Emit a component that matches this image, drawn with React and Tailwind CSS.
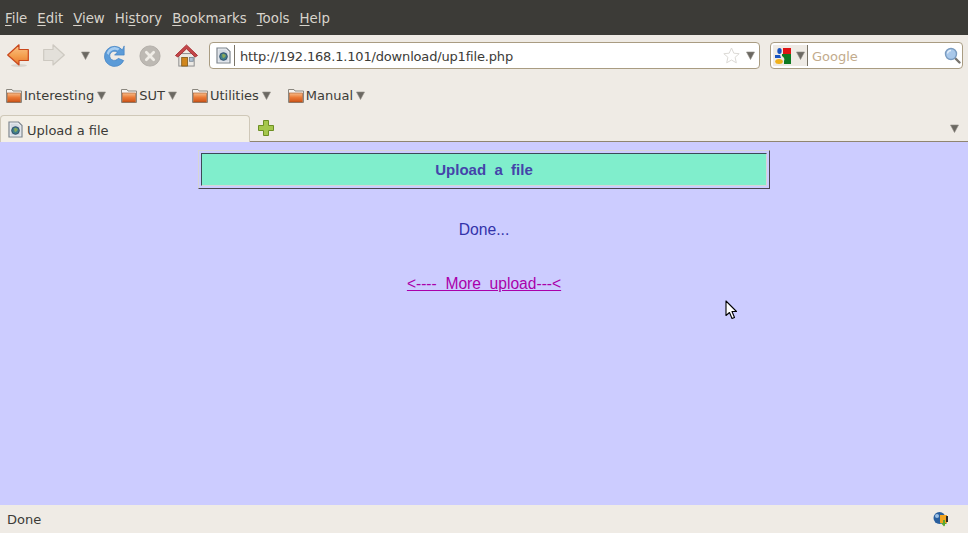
import React from "react";

const UI_FONT = "font-['DejaVu_Sans',sans-serif]";

const Caret = ({ className = "" }) => (
  <svg width="9" height="9" viewBox="0 0 9 9" className={`shrink-0 ${className}`}>
    <path d="M0.5 1H8.5L4.5 8.5Z" fill="#6b6862" stroke="#8f8b83" strokeWidth="0.6" />
  </svg>
);

const PageIcon = () => (
  <svg width="15" height="17" viewBox="0 0 15 17" className="shrink-0">
    <path d="M1 1H10.5L14 4.5V16H1Z" fill="#eef1f4" stroke="#7d858e" strokeWidth="1.2" />
    <path d="M2.5 2.5H9.5L12.5 5.5V14.5H2.5Z" fill="#d3dae2" />
    <circle cx="7.5" cy="9.5" r="3.8" fill="#3f7f8a" stroke="#33506e" />
    <path d="M6 7.5C7 6.5 9 7 9.8 8.5C9 10.5 7.5 11.5 6.5 10.5Z" fill="#8aa85a" />
  </svg>
);

const Folder = () => (
  <svg width="16" height="15" viewBox="0 0 16 15" className="shrink-0">
    <defs>
      <linearGradient id="folderBody" x1="0" y1="0" x2="0" y2="1">
        <stop offset="0" stopColor="#f7bd8a" />
        <stop offset="0.5" stopColor="#ea7a36" />
        <stop offset="1" stopColor="#cf5418" />
      </linearGradient>
    </defs>
    <path d="M0.5 1.5H6L7 3H15.5V14.5H0.5Z" fill="#f6f4f0" stroke="#8b877f" />
    <rect x="1.5" y="5" width="13" height="9" fill="url(#folderBody)" stroke="#a8521f" strokeWidth="0.6" />
  </svg>
);

const BackIcon = () => (
  <svg width="22" height="23" viewBox="0 0 22 23">
    <defs>
      <linearGradient id="backFill" x1="0" y1="0" x2="0" y2="1">
        <stop offset="0" stopColor="#fbc48a" />
        <stop offset="0.55" stopColor="#f4a04f" />
        <stop offset="1" stopColor="#e8742b" />
      </linearGradient>
    </defs>
    <ellipse cx="12" cy="21.5" rx="8" ry="1.4" fill="#d8d4cd" />
    <path d="M0.7 11L12 0.8V5.5H21.3V16.5H12V21Z" fill="url(#backFill)" stroke="#c9471b" strokeWidth="1.2" strokeLinejoin="round" />
  </svg>
);

const ForwardIcon = () => (
  <svg width="22" height="23" viewBox="0 0 22 23">
    <path d="M21.3 11L10 0.8V5.5H0.7V16.5H10V21Z" fill="#e3e0da" stroke="#cdc9c1" strokeWidth="1.2" strokeLinejoin="round" />
  </svg>
);

const ReloadIcon = () => (
  <svg width="22" height="22" viewBox="0 0 24 24">
    <path d="M20 5.5A11 11 0 1 0 21.5 17L15.5 14.5A5 5 0 1 1 14.5 8L11.5 11H22V1Z" fill="#5b9bd8" stroke="#3f7fc0" strokeWidth="0.7" strokeLinejoin="round" />
    <path d="M3 9A9 9 0 0 1 17 4L15 6A7 7 0 0 0 5 11Z" fill="#a7cdf0" />
  </svg>
);

const StopIcon = () => (
  <svg width="22" height="22" viewBox="0 0 24 24">
    <circle cx="12" cy="12" r="11" fill="#bdb9b3" stroke="#b0aca6" />
    <path d="M8 8L16 16M16 8L8 16" stroke="#efece6" strokeWidth="3" strokeLinecap="round" />
  </svg>
);

const HomeIcon = () => (
  <svg width="23" height="23" viewBox="0 0 24 24">
    <rect x="4" y="10" width="16" height="13" fill="#ece9e4" stroke="#8a8a8a" />
    <path d="M0.5 12L12 1L23.5 12L21 13.5L12 5L3 13.5Z" fill="#c4474a" stroke="#a62f33" strokeLinejoin="round" />
    <rect x="7" y="14" width="6" height="9" fill="#d0861d" stroke="#7a5210" strokeWidth="0.8" />
    <rect x="15" y="14" width="4" height="4" fill="#b2c3d4" stroke="#6f7f8f" strokeWidth="0.8" />
  </svg>
);

const StarIcon = () => (
  <svg width="17" height="17" viewBox="0 0 17 17">
    <path d="M8.5 1L10.8 6.2L16.2 6.7L12.1 10.3L13.3 15.8L8.5 13L3.7 15.8L4.9 10.3L0.8 6.7L6.2 6.2Z" fill="#fff" stroke="#dcdad6" />
  </svg>
);

const GoogleIcon = () => (
  <svg width="16" height="16" viewBox="0 0 16 16" className="shrink-0">
    <rect x="8" width="8" height="6" fill="#e01515" />
    <path d="M7 6H16V16H9V13C10 11 9 9 7 8Z" fill="#0f7a22" />
    <ellipse cx="4.5" cy="3" rx="2.2" ry="3" fill="#1a55c0" />
    <path d="M0 7H5L6 10H0Z" fill="#1a55c0" />
    <ellipse cx="4" cy="13.5" rx="3.8" ry="2.5" fill="#f0b01a" />
  </svg>
);

const SearchIcon = () => (
  <svg width="17" height="17" viewBox="0 0 17 17">
    <path d="M10.5 10.5L15.5 15.5" stroke="#77736c" strokeWidth="2.4" strokeLinecap="round" />
    <circle cx="7" cy="7" r="5.5" fill="#a9c8ea" stroke="#7b9cc0" strokeWidth="1.4" />
    <path d="M3.5 6.5A3.5 3.5 0 0 1 7 3.5" stroke="#e3eefa" strokeWidth="1.3" fill="none" />
  </svg>
);

const PlusIcon = () => (
  <svg width="16" height="16" viewBox="0 0 16 16">
    <path d="M5.5 0.5H10.5V5.5H15.5V10.5H10.5V15.5H5.5V10.5H0.5V5.5H5.5Z" fill="#a5c74c" stroke="#6d8f23" />
  </svg>
);

const StatusIcon = () => (
  <svg width="16" height="16" viewBox="0 0 16 16">
    <circle cx="6.5" cy="7" r="6" fill="#2a5f9e" />
    <circle cx="4" cy="5" r="2" fill="#9cc0e4" />
    <rect x="7" y="4" width="7" height="8" fill="#f0a422" />
    <rect x="13" y="5" width="2" height="6" fill="#2b2b2b" />
    <path d="M10 9H12V12H14L11 15.5L8 12H10Z" fill="#5aa832" />
    <rect x="12" y="13" width="3" height="2" fill="#e8e8e8" />
  </svg>
);

const CursorIcon = () => (
  <svg width="13" height="20" viewBox="0 0 13 20">
    <path d="M1 1V15.5L4.5 12.5L7 18.5L9.5 17.5L7 11.5H11.5Z" fill="#fff" stroke="#000" strokeWidth="1.1" strokeLinejoin="round" />
  </svg>
);

const MenuItem = ({ before = "", letter, after }) => (
  <span>
    {before}
    <u className="underline-offset-2">{letter}</u>
    {after}
  </span>
);

const Bookmark = ({ label }) => (
  <div className="flex items-center">
    <Folder />
    <span className="ml-[2px] mr-[3px] pt-[2px]">{label}</span>
    <Caret />
  </div>
);

export default function App() {
  return (
    <div className={`h-[533px] w-[968px] flex flex-col overflow-hidden relative bg-[#efebe5] text-[13px] text-[#3c3b37] ${UI_FONT}`}>
      {/* menu bar */}
      <div className="h-[35px] shrink-0 bg-[#3c3b37] text-[#d8d4cc] text-[13.33px] flex items-center gap-[10px] pl-[5px] pt-[2px]">
        <MenuItem letter="F" after="ile" />
        <MenuItem letter="E" after="dit" />
        <MenuItem letter="V" after="iew" />
        <MenuItem before="Hi" letter="s" after="tory" />
        <MenuItem letter="B" after="ookmarks" />
        <MenuItem letter="T" after="ools" />
        <MenuItem letter="H" after="elp" />
      </div>

      {/* navigation toolbar */}
      <div className="h-[41px] shrink-0 flex items-center pl-[7px]">
        <BackIcon />
        <div className="ml-[14px]"><ForwardIcon /></div>
        <Caret className="ml-[16px]" />
        <div className="ml-[14px]"><ReloadIcon /></div>
        <div className="ml-[13px]"><StopIcon /></div>
        <div className="ml-[14px]"><HomeIcon /></div>
        <div className="ml-[11px] w-[551px] h-[27px] bg-white border border-[#a99c82] rounded-[4px] flex items-center pl-[6px] pr-[4px]">
          <PageIcon />
          <div className="w-px h-[21px] bg-[#7a7467] ml-[3px] mr-[5px]" />
          <span className="tracking-[-0.17px] pt-[2px]">http://192.168.1.101/download/up1file.php</span>
          <div className="ml-auto flex items-center gap-[6px]">
            <StarIcon />
            <Caret />
          </div>
        </div>
        <div className="ml-[10px] w-[193px] h-[27px] bg-white border border-[#a99c82] rounded-[4px] flex items-center pr-[1px]">
          <div className="h-[21px] w-[35px] ml-[2px] bg-[#efebe5] border-r border-[#7a7467] flex items-center pl-[2px] gap-[5px]">
            <GoogleIcon />
            <Caret />
          </div>
          <span className="ml-[4px] pt-[2px] text-[#c2ab8c]">Google</span>
          <div className="ml-auto"><SearchIcon /></div>
        </div>
      </div>

      {/* bookmarks toolbar */}
      <div className="h-[36px] shrink-0 flex items-center pl-[6px] pt-[2px] gap-[15px]">
        <Bookmark label="Interesting" />
        <Bookmark label="SUT" />
        <Bookmark label="Utilities" />
        <div className="ml-[2px]"><Bookmark label="Manual" /></div>
      </div>

      {/* tab strip */}
      <div className="h-[30px] shrink-0 flex items-end border-b border-[#8f8570]">
        <div className="h-[27px] -mb-px w-[250px] bg-[#f3efe6] border border-b-0 border-[#cfc8b8] rounded-t-[4px] flex items-center pl-[7px] pt-[1px] gap-[4px]">
          <PageIcon />
          <span className="pt-[2px]">Upload a file</span>
        </div>
        <div className="ml-[8px] mb-[5px]"><PlusIcon /></div>
        <Caret className="ml-auto mr-[9px] mb-[8px]" />
      </div>

      {/* page content */}
      <div className="flex-1 bg-[#ccccff] font-['Liberation_Sans',sans-serif] text-[16px] flex flex-col items-center pt-[8px]">
        <div className="w-[572px] h-[39px] p-[2px] border border-t-[#d6d6d6] border-l-[#d6d6d6] border-r-[#4a4650] border-b-[#4a4650]">
          <div className="h-full border border-t-[#3c4a55] border-l-[#3c4a55] border-r-[#d6d6d6] border-b-[#d6d6d6] bg-[#80eecc] flex items-center justify-center pt-[1px] text-[15px] font-bold text-[#4444aa] whitespace-pre">
            Upload  a  file
          </div>
        </div>
        <p className="mt-[29px] text-[15.7px] text-[#3333aa]">Done...</p>
        <a href="#" className="mt-[30px] text-[15.6px] text-[#aa00aa] underline whitespace-pre">
          {"<----  More  upload---<"}
        </a>
      </div>

      {/* status bar */}
      <div className="h-[28px] shrink-0 flex items-center pl-[7px] pr-[19px] justify-between">
        <span className="pt-[2px]">Done</span>
        <StatusIcon />
      </div>

      {/* mouse pointer */}
      <div className="absolute left-[725px] top-[300px]">
        <CursorIcon />
      </div>
    </div>
  );
}
